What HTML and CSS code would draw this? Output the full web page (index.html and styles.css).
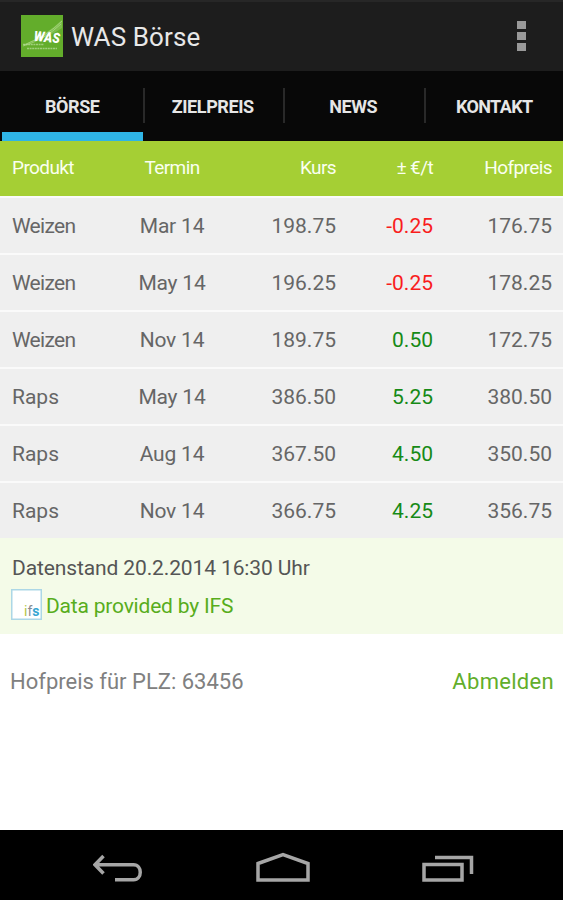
FILE: index.html
```html
<!DOCTYPE html>
<html lang="de">
<head>
  <meta charset="UTF-8" />
  <title>WAS Börse</title>
  <link rel="stylesheet" href="styles.css">
</head>
<body>

<header class="action-bar">
  <svg class="logo" viewBox="0 0 42 42">
    <rect width="42" height="42" fill="#63ad2b"/>
    <path d="M4 29Q25 20 41 5V13Q29 22 4 29Z" fill="#8bc45b" opacity=".65"/>
    <path d="M2 31Q23 25 40 9M3 30Q26 21 41 6" fill="none" stroke="#b2dc8c" stroke-width=".7"/>
    <text class="logo-name" x="13" y="27" textLength="26" lengthAdjust="spacingAndGlyphs" transform="rotate(5 26 22)">WAS</text>
    <path d="M2 29.500H23M6 33.500H36" stroke="#b6dc97" stroke-width="1.500" stroke-dasharray="2 .6" opacity=".75"/>
  </svg>
  <h1>WAS Börse</h1>
  <div class="overflow-menu"><i></i><i></i><i></i></div>
</header>

<nav class="tabs">
  <a class="tab active">BÖRSE</a>
  <a class="tab">ZIELPREIS</a>
  <a class="tab">NEWS</a>
  <a class="tab contact">KONTAKT</a>
</nav>

<table class="prices">
  <colgroup>
    <col class="col-product"><col class="col-date"><col class="col-price"><col class="col-change"><col>
  </colgroup>
  <thead>
    <tr><th>Produkt</th><th class="date">Termin</th><th class="num">Kurs</th><th class="num">± €/t</th><th class="num">Hofpreis</th></tr>
  </thead>
  <tbody>
    <tr><td>Weizen</td><td class="date">Mar 14</td><td class="num">198.75</td><td class="num down">-0.25</td><td class="num">176.75</td></tr>
    <tr><td>Weizen</td><td class="date">May 14</td><td class="num">196.25</td><td class="num down">-0.25</td><td class="num">178.25</td></tr>
    <tr><td>Weizen</td><td class="date">Nov 14</td><td class="num">189.75</td><td class="num up">0.50</td><td class="num">172.75</td></tr>
    <tr><td class="raps">Raps</td><td class="date">May 14</td><td class="num">386.50</td><td class="num up">5.25</td><td class="num">380.50</td></tr>
    <tr><td class="raps">Raps</td><td class="date">Aug 14</td><td class="num">367.50</td><td class="num up">4.50</td><td class="num">350.50</td></tr>
    <tr><td class="raps">Raps</td><td class="date">Nov 14</td><td class="num">366.75</td><td class="num up">4.25</td><td class="num">356.75</td></tr>
  </tbody>
</table>

<div class="source">
  <div class="timestamp">Datenstand 20.2.2014 16:30 Uhr</div>
  <a class="provider">
    <svg class="ifs" viewBox="0 0 31 31">
      <rect x=".75" y=".75" width="29.500" height="29.500" fill="#fff" stroke="#acd7e6" stroke-width="1.500"/>
      <text class="ifs-name" x="13" y="27"><tspan fill="#b4c446">i</tspan><tspan fill="#858b91">f</tspan><tspan class="ifs-s">s</tspan></text>
    </svg>
    <span>Data provided by IFS</span>
  </a>
</div>

<div class="account">
  <span class="plz">Hofpreis für PLZ: 63456</span>
  <a class="logout">Abmelden</a>
</div>

<footer class="nav-bar">
  <svg viewBox="0 0 50 32">
    <path d="M1.500 12.700H40.500C49.500 12.700 49.500 27.700 40.500 27.700H22M10.500 4L2 12.700L10.500 21.500"/>
  </svg>
  <svg viewBox="0 0 54 32">
    <path d="M2 11.500L27 2.500L52 11.500V28H2Z"/>
  </svg>
  <svg viewBox="0 0 52 32">
    <path d="M2 12.500H40V28H2ZM13 5.500H49.500V22"/>
  </svg>
</footer>

</body>
</html>
```
FILE: styles.css
```css
* {
  box-sizing: border-box;
}
body {
  margin: 0;
  height: 900px;
  display: flex;
  flex-direction: column;
  background: #fff;
  font-family: Roboto, sans-serif;
  font-size: 21px;
  color: #666;
  overflow: hidden;
}

/* Top bar */
.action-bar {
  display: flex;
  align-items: center;
  height: 71px;
  padding: 0 37px 2px 21px;
  background: #1d1d1d;
  border-top: 2px solid #272727;
  color: #e8e8e8;
}
.logo {
  width: 42px;
  height: 42px;
  margin-right: 8px;
}
.logo-name {
  font: italic 900 14px Roboto, sans-serif;
  fill: #fff;
}
h1 {
  margin: 2px 0 0;
  font-size: 26px;
  font-weight: 400;
  letter-spacing: 0.1px;
}
.overflow-menu {
  display: flex;
  flex-direction: column;
  gap: 3px;
  margin-left: auto;
}
.overflow-menu i {
  width: 9px;
  height: 8px;
  background: #999;
}

/* Tabs */
.tabs {
  display: flex;
  height: 70px;
  padding-left: 2px;
  background: #080808;
}
.tab {
  position: relative;
  flex: 0 0 140.5px;
  border-bottom: 9px solid transparent;
  padding-top: 9px;
  line-height: 53px;
  text-align: center;
  font-size: 18px;
  font-weight: 700;
  letter-spacing: -0.4px;
  color: #e6e6e6;
}
.tab.active {
  border-color: #2fb5e6;
}
.tab.contact {
  flex: 1;
  padding-left: 2px;
  letter-spacing: -0.6px;
}
.tab + .tab::before {
  content: "";
  position: absolute;
  left: 0;
  top: 17px;
  width: 2px;
  height: 35px;
  background: #292929;
}

/* Price table */
.prices {
  width: 100%;
  table-layout: fixed;
  border-collapse: separate;
  border-spacing: 0;
}
.col-product { width: 115px; }
.col-date { width: 114px; }
.col-price { width: 118px; }
.col-change { width: 97px; }
.prices th {
  height: 55px;
  padding: 0 12px 2px;
  background: #a5cf34;
  color: #fafff0;
  font-size: 19px;
  font-weight: 400;
  letter-spacing: -0.6px;
  text-align: left;
}
.prices td {
  height: 57px;
  padding: 1px 12px 0;
  background: #efefef;
  border-top: 2px solid #fafafa;
  letter-spacing: -0.7px;
}
.prices td.raps {
  letter-spacing: 0;
}
.prices .date {
  padding-left: 0;
  padding-right: 0;
  text-align: center;
}
.prices td.date {
  letter-spacing: -0.2px;
}
.prices .num {
  padding-left: 0;
  padding-right: 11px;
  text-align: right;
}
.prices td.num {
  letter-spacing: 0;
}
.prices .down { color: #f91d1d; }
.prices .up { color: #168a16; }

/* Data source */
.source {
  height: 96px;
  padding: 13px 12px 0;
  background: #f4fbe8;
}
.timestamp {
  line-height: 34px;
  letter-spacing: -0.12px;
  color: #555;
}
.provider {
  display: flex;
  align-items: center;
  margin-top: 4px;
  margin-left: -1px;
  color: #58ad1c;
  letter-spacing: -0.2px;
}
.provider span {
  padding-top: 2px;
}
.ifs {
  width: 31px;
  height: 31px;
  margin-right: 4px;
}
.ifs-name {
  font: 14px Roboto, sans-serif;
  letter-spacing: 0;
}
.ifs-s {
  fill: #36a6d2;
  font-weight: 700;
}

.account {
  display: flex;
  justify-content: space-between;
  flex: 1;
  padding: 34px 9px 0 10px;
  font-size: 22px;
  line-height: 28px;
  color: #808080;
}
.logout {
  color: #62ae2b;
  letter-spacing: 0.3px;
}

/* System buttons */
.nav-bar {
  display: flex;
  justify-content: space-between;
  height: 70px;
  padding: 22px 89px 0 93px;
  background: #000;
}
.nav-bar svg {
  height: 32px;
  fill: none;
  stroke: #a6a6a6;
  stroke-width: 3.5;
}
```
